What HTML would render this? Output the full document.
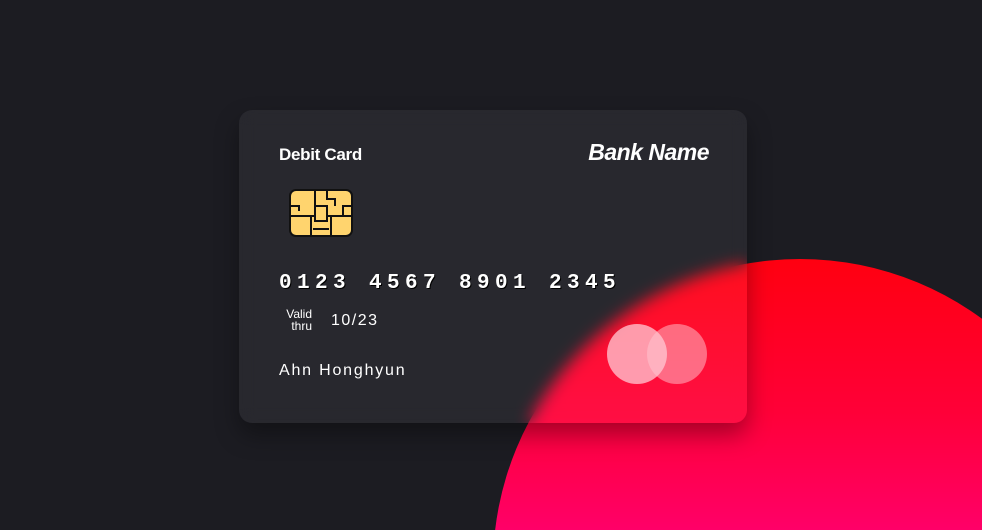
<!DOCTYPE html>
<html><head><meta charset="utf-8"><style>
html,body{margin:0;padding:0;width:982px;height:530px;overflow:hidden;background:#1c1c22;font-family:"Liberation Sans",sans-serif;}
.wrap{position:relative;width:982px;height:530px;overflow:hidden;background:#1c1c22;}
.circle{position:absolute;left:493px;top:259px;width:614px;height:614px;border-radius:50%;background:linear-gradient(180deg,#ff0010 0%,#ff0038 25%,#ff006a 45%);}
.card{position:absolute;left:239px;top:110px;width:508px;height:313px;border-radius:13px;background:rgba(255,255,255,0.055);backdrop-filter:blur(8px);-webkit-backdrop-filter:blur(8px);box-shadow:0 12px 24px rgba(0,0,0,0.35);color:#fff;}
.t1{position:absolute;left:40px;top:35px;font-size:17px;font-weight:bold;letter-spacing:-0.3px;}
.bank{position:absolute;right:38px;top:29px;font-size:23px;font-style:italic;font-weight:bold;letter-spacing:-0.5px;}
.chip{position:absolute;left:50px;top:79px;}
.num{position:absolute;left:40px;top:162px;font-family:"Liberation Mono",monospace;font-weight:bold;font-size:21px;letter-spacing:5.4px;text-shadow:1px 1px 0 #000;}
.valid{position:absolute;left:40px;top:198px;font-size:12px;line-height:12px;text-align:right;width:33px;}
.date{position:absolute;left:92px;top:202px;font-size:16px;letter-spacing:1.5px;}
.name{position:absolute;left:40px;top:252px;font-size:16px;letter-spacing:1.8px;}
.c1,.c2{position:absolute;top:214px;width:60px;height:60px;border-radius:50%;}
.c1{left:368px;background:rgba(255,210,220,0.72);}
.c2{left:408px;background:rgba(255,200,210,0.5);}
</style></head><body><div class="wrap">
<div class="circle"></div>
<div class="card">
<div class="t1">Debit Card</div>
<div class="bank">Bank Name</div>
<svg class="chip" width="64" height="48" viewBox="0 0 64 48"><rect x="1" y="1" width="62" height="46" rx="6" fill="#ffd46e" stroke="#111" stroke-width="2"/>
<g stroke="#111" stroke-width="2" fill="none"><path d="M1 17H10V22M1 27H26V17H38V27H63M26 17V1M38 1V10H46V17M26 27V32H38V27M24 40H40M22 27V47M42 27V47M54 27V17H63"/></g></svg>
<div class="num">0123 4567 8901 2345</div>
<div class="valid">Valid<br>thru</div>
<div class="date">10/23</div>
<div class="name">Ahn Honghyun</div>
<div class="c1"></div><div class="c2"></div>
</div>
</div></body></html>
